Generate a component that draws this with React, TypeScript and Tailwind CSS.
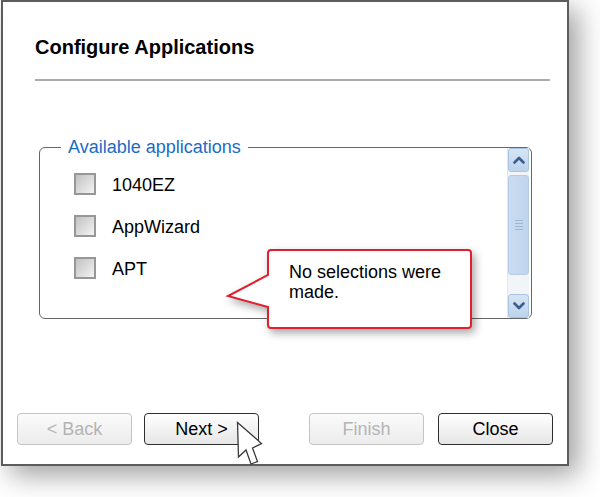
import React from 'react';

const apps = ['1040EZ', 'AppWizard', 'APT'];

function Chevron({ up }: { up?: boolean }) {
  return (
    <svg width="12" height="8" viewBox="0 0 12 8" className="block">
      <path
        d={up ? 'M1.5 6.5 L6 2 L10.5 6.5' : 'M1.5 1.5 L6 6 L10.5 1.5'}
        fill="none"
        stroke="#3b5f8c"
        strokeWidth="2.6"
        strokeLinecap="round"
        strokeLinejoin="round"
      />
    </svg>
  );
}

function ScrollButton({ up }: { up?: boolean }) {
  return (
    <div className="h-[24px] rounded-[3px] border border-[#a9c4e3] bg-gradient-to-b from-[#d6e5f5] to-[#bcd3ec] flex items-center justify-center">
      <Chevron up={up} />
    </div>
  );
}

function WizardButton({ label, disabled }: { label: string; disabled?: boolean }) {
  return (
    <button
      type="button"
      disabled={disabled}
      className={
        disabled
          ? 'w-[115px] h-[32px] rounded-[4px] border border-[#c4c4c4] bg-gradient-to-b from-[#fbfbfb] to-[#ececec] text-[18px] leading-none text-[#b4b4b4]'
          : 'w-[115px] h-[32px] rounded-[4px] border border-[#2e2e2e] bg-gradient-to-b from-white to-[#e6e6e6] text-[18px] leading-none text-black'
      }
    >
      {label}
    </button>
  );
}

export default function App() {
  return (
    <div className="relative w-[600px] h-[497px] bg-white overflow-hidden font-['Liberation_Sans',Arial,sans-serif]">
      {/* dialog */}
      <div className="ml-[1px] w-[568px] h-[466px] border-2 border-[#5c5c5c] bg-white shadow-[9px_9px_26px_rgba(0,0,0,0.38)] flex flex-col">
        <h1 className="pl-[32px] pt-[34px] text-[20px] leading-[22px] font-bold text-black">Configure Applications</h1>
        <div className="mt-[21px] ml-[32px] mr-[17px] h-[2px] bg-[#ababab]" />

        {/* group box */}
        <div className="relative mt-[66px] ml-[36px] w-[493px] h-[172px] rounded-[6px] border border-[#666] flex">
          <span className="absolute left-[21px] top-[-13px] px-[7px] bg-white text-[18px] leading-[24px] text-[#1b6cc4]">
            Available applications
          </span>

          <div className="pl-[34px] pt-[25px] flex flex-col gap-[20px]">
            {apps.map((a) => (
              <label key={a} className="flex items-center h-[22px] gap-[16px]">
                <span className="w-[22px] h-[22px] border-2 border-[#979797] bg-gradient-to-br from-[#c2c2c2] to-[#f3f3f3]" />
                <span className="text-[18px] leading-[22px] text-black mt-[2px]">{a}</span>
              </label>
            ))}
          </div>

          {/* scrollbar */}
          <div className="ml-auto mr-[2px] w-[22px] flex flex-col bg-[#f2f5f8] border-l border-[#e2e8ef]">
            <ScrollButton up />
            <div className="mt-[3px] h-[100px] rounded-[3px] border border-[#b5cce8] bg-gradient-to-r from-[#cadcf1] to-[#c0d5ee] flex flex-col items-center justify-center gap-[2px]">
              <span className="w-[8px] h-px bg-[#9ab6d8]" />
              <span className="w-[8px] h-px bg-[#9ab6d8]" />
              <span className="w-[8px] h-px bg-[#9ab6d8]" />
              <span className="w-[8px] h-px bg-[#9ab6d8]" />
            </div>
            <div className="flex-1" />
            <ScrollButton />
          </div>
        </div>

        {/* buttons */}
        <div className="mt-auto mb-[19px] pl-[14px] flex items-center">
          <WizardButton label="< Back" disabled />
          <div className="ml-[12px]">
            <WizardButton label="Next >" />
          </div>
          <div className="ml-[50px]">
            <WizardButton label="Finish" disabled />
          </div>
          <div className="ml-[14px]">
            <WizardButton label="Close" />
          </div>
        </div>
      </div>

      {/* callout */}
      <svg
        className="absolute left-[224px] top-[246px] drop-shadow-[3px_4px_4px_rgba(0,0,0,0.35)]"
        width="254"
        height="90"
        viewBox="0 0 254 90"
      >
        <path
          d="M47 4 H244 Q247 4 247 7 V79 Q247 82 244 82 H47 Q44 82 44 79 V61 L4 50 L44 29 V7 Q44 4 47 4 Z"
          fill="white"
          stroke="#e0202c"
          strokeWidth="2"
          strokeLinejoin="miter"
        />
      </svg>
      <p className="absolute left-[289px] top-[262px] w-[170px] text-[18px] leading-[20px] text-black">
        No selections were made.
      </p>

      {/* mouse pointer */}
      <svg className="absolute left-[236px] top-[421px]" width="28" height="46" viewBox="0 0 28 46">
        <path
          d="M1.5 1.5 L2.5 36 L10 29 L15 43 L21.5 40.5 L16.5 27 L25.5 22.5 Z"
          fill="white"
          stroke="#3a3a3a"
          strokeWidth="1.3"
          strokeLinejoin="miter"
        />
      </svg>
    </div>
  );
}
